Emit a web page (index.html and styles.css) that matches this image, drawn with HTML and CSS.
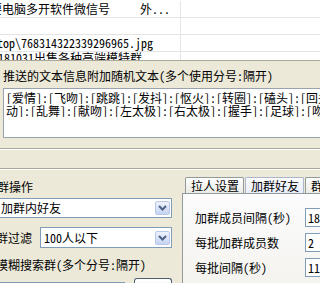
FILE: index.html
```html
<!DOCTYPE html>
<html lang="zh-CN">
<head>
<meta charset="utf-8">
<title>群设置</title>
<link rel="stylesheet" href="styles.css">
</head>
<body>
<div class="list">
  <div class="row"><div class="ca r1">要电脑多开软件微信号</div><div class="cb">外...</div><div class="cc"></div></div>
  <div class="row"><div class="ca"></div><div class="cb"></div><div class="cc"></div></div>
  <div class="row"><div class="ca r3">top\768314322339296965.jpg</div><div class="cb"></div><div class="cc"></div></div>
  <div class="row"><div class="ca r4">2181031出售各种高端模特群</div><div class="cb"></div><div class="cc"></div></div>
</div>

<div class="push">
  <div class="push-label">推送的文本信息附加随机文本(多个使用分号:隔开)</div>
  <div class="memo">
    <div class="memo-line">[爱情]:[飞吻]:[跳跳]:[发抖]:[怄火]:[转圈]:[磕头]:[回头]</div>
    <div class="memo-line">动]:[乱舞]:[献吻]:[左太极]:[右太极]:[握手]:[足球]:[吻]</div>
  </div>
</div>

<div class="etch etch-a"></div>
<div class="etch etch-b"></div>

<div class="bottom">
  <div class="ops">
    <div class="lbl lbl-a">群操作</div>
    <div class="combo combo-a">
      <span class="combo-text">加群内好友</span>
      <span class="combo-btn"><svg width="9" height="6" viewBox="0 0 9 6"><path d="M1 1 L4.5 4.5 L8 1" fill="none" stroke="#4d6185" stroke-width="2"/></svg></span>
    </div>
    <div class="filter">
      <span class="lbl lbl-b">群过滤</span>
      <div class="combo combo-b">
        <span class="combo-text">100人以下</span>
        <span class="combo-btn"><svg width="9" height="6" viewBox="0 0 9 6"><path d="M1 1 L4.5 4.5 L8 1" fill="none" stroke="#4d6185" stroke-width="2"/></svg></span>
      </div>
    </div>
    <div class="lbl lbl-c">模糊搜索群(多个分号:隔开)</div>
    <div class="search">
      <div class="search-box"></div>
      <div class="search-btn"></div>
    </div>
  </div>

  <div class="tabs">
    <div class="tabstrip">
      <div class="tab">拉人设置</div>
      <div class="tab tab-hot">加群好友</div>
      <div class="tab tab-cut">群</div>
    </div>
    <div class="panel">
      <div class="prow"><span class="plbl">加群成员间隔(秒)</span><span class="pin">18</span></div>
      <div class="prow"><span class="plbl">每批加群成员数</span><span class="pin">2</span></div>
      <div class="prow"><span class="plbl">每批间隔(秒)</span><span class="pin">11</span></div>
    </div>
  </div>
</div>
</body>
</html>
```

FILE: styles.css
```css
html, body {
  margin: 0;
  padding: 0;
}
body {
  width: 320px;
  height: 283px;
  overflow: hidden;
  background: #ece9d8;
  color: #000;
  font-family: "Noto Sans Mono CJK SC", "Noto Sans CJK SC", monospace;
  font-size: 12px;
  line-height: 14px;
}

/* list view */
.list {
  background: #fff;
  height: 61px;
  box-sizing: border-box;
  padding-top: 1px;
  border-bottom: 1px solid #aca899;
  overflow: hidden;
}
.row {
  display: grid;
  grid-template-columns: 138px 43px 1fr;
  height: 17px;
  box-sizing: border-box;
  border-bottom: 1px solid #e4e4e4;
  line-height: 16px;
  white-space: nowrap;
}
.ca {
  overflow: visible;
}
.cb, .cc {
  overflow: hidden;
}
.cb {
  border-right: 1px solid #e4e4e4;
  padding-left: 2px;
}
.r1 { text-indent: -10px; }
.r3 { text-indent: -3px; }
.r4 { text-indent: -8px; line-height: 12px; }

/* push text group */
.push {
  padding: 8px 0 0 3px;
}
.push-label {
  white-space: nowrap;
  height: 14px;
}
.memo {
  margin-top: 5px;
  background: #fff;
  border: 1px solid #9aa3ad;
  border-right: none;
  padding: 2px 0 0 2px;
  line-height: 13px;
  white-space: nowrap;
  overflow: hidden;
  height: 46px;
}
.memo-line {
  height: 13px;
  overflow: hidden;
}

.etch {
  height: 1px;
  background: #aca899;
  border-bottom: 1px solid #fff;
}
.etch-a { margin-top: 10px; }
.etch-b { margin-top: 18px; }

/* bottom area */
.bottom {
  display: flex;
  gap: 10px;
  white-space: nowrap;
  height: 113px;
  overflow: hidden;
}
.ops {
  width: 176px;
  margin-left: -4px;
  padding-top: 10px;
  flex: none;
}
.lbl { display: block; height: 14px; }
.lbl-a { text-indent: 1px; }
.combo {
  display: flex;
  align-items: center;
  background: #fff;
  border: 1px solid #7f9db9;
  box-sizing: border-box;
  padding: 0 1px 0 3px;
}
.combo-a {
  margin-top: 4px;
  height: 20px;
}
.combo-text { flex: 1; }
.combo-a .combo-text { text-indent: 1px; }
.combo-btn {
  width: 15px;
  height: 14px;
  box-sizing: border-box;
  border: 1px solid #b9c8e8;
  border-radius: 2px;
  background: linear-gradient(#eef3fd, #c6d4f3);
  display: flex;
  align-items: center;
  justify-content: center;
}
.filter {
  display: flex;
  align-items: center;
  margin-top: 9px;
}
.lbl-b { width: 44px; flex: none; }
.combo-b {
  flex: 1;
  height: 21px;
}
.lbl-c {
  margin-top: 10px;
}
.search {
  display: flex;
  align-items: flex-start;
  margin-top: 6px;
  height: 5px;
}
.search-box {
  width: 127px;
  height: 6px;
  margin-top: 4px;
  background: #fff;
  border: 1px solid #7f9db9;
  border-bottom: none;
  flex: none;
}
.search-btn {
  margin-left: 9px;
  width: 36px;
  height: 10px;
  border: 1px solid #4f5f72;
  border-bottom: none;
  border-radius: 3px 3px 0 0;
  background: linear-gradient(#fff, #f6f5f0);
}

/* tab control */
.tabs {
  flex: 1;
  padding-top: 7px;
}
.tabstrip {
  display: flex;
  padding-left: 3px;
  height: 16px;
}
.tab {
  height: 16px;
  box-sizing: border-box;
  padding: 1px 4px 0 5px;
  line-height: 14px;
  border: 1px solid #919b9c;
  border-bottom: none;
  border-radius: 2px 2px 0 0;
  background: linear-gradient(#fefefe, #ecebe5);
  margin-right: 1px;
}
.tab-hot {
  background: linear-gradient(#fbfcff, #e8edf8);
  border-color: #a9b6cc;
}
.tab-cut {
  border-right: none;
  border-radius: 2px 0 0 0;
}
.panel {
  height: 76px;
  border: 1px solid #919b9c;
  border-right: none;
  border-bottom: none;
  background: linear-gradient(#fcfcfe, #f4f3ee);
  padding: 14px 0 0 12px;
}
.prow {
  display: flex;
  align-items: center;
  height: 19px;
  margin-bottom: 6px;
}
.plbl {
  width: 110px;
  flex: none;
}
.pin {
  flex: 1;
  height: 19px;
  box-sizing: border-box;
  background: #fff;
  border: 1px solid #7f9db9;
  border-right: none;
  padding-left: 2px;
  line-height: 17px;
}
```
